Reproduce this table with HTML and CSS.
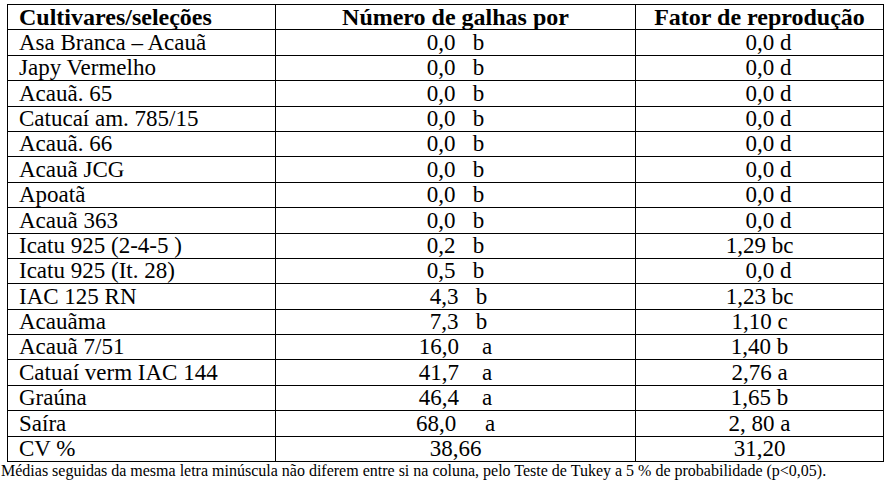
FILE: index.html
```html
<!DOCTYPE html>
<html lang="pt">
<head>
<meta charset="utf-8">
<link rel="stylesheet" href="styles.css">
</head>
<body>
<div class="page">
<table class="data">
  <colgroup>
    <col class="c1"><col class="c2"><col class="c3">
  </colgroup>
  <thead>
    <tr><th class="name">Cultivares/seleções</th><th>Número de galhas por</th><th>Fator de reprodução</th></tr>
  </thead>
  <tbody>
    <tr><td class="name">Asa Branca – Acauã</td><td class="v2">0,0   b</td><td class="v3 zero">0,0 d</td></tr>
    <tr><td class="name">Japy Vermelho</td><td class="v2">0,0   b</td><td class="v3 zero">0,0 d</td></tr>
    <tr><td class="name">Acauã. 65</td><td class="v2">0,0   b</td><td class="v3 zero">0,0 d</td></tr>
    <tr><td class="name">Catucaí am. 785/15</td><td class="v2">0,0   b</td><td class="v3 zero">0,0 d</td></tr>
    <tr><td class="name">Acauã. 66</td><td class="v2">0,0   b</td><td class="v3 zero">0,0 d</td></tr>
    <tr><td class="name">Acauã JCG</td><td class="v2">0,0   b</td><td class="v3 zero">0,0 d</td></tr>
    <tr><td class="name">Apoatã</td><td class="v2">0,0   b</td><td class="v3 zero">0,0 d</td></tr>
    <tr><td class="name">Acauã 363</td><td class="v2">0,0   b</td><td class="v3 zero">0,0 d</td></tr>
    <tr><td class="name">Icatu 925 (2-4-5 )</td><td class="v2">0,2   b</td><td class="v3">1,29 bc</td></tr>
    <tr><td class="name">Icatu 925 (It. 28)</td><td class="v2">0,5   b</td><td class="v3 zero">0,0 d</td></tr>
    <tr><td class="name">IAC 125 RN</td><td class="v2"> 4,3   b</td><td class="v3">1,23 bc</td></tr>
    <tr><td class="name">Acauãma</td><td class="v2"> 7,3   b</td><td class="v3">1,10 c</td></tr>
    <tr><td class="name">Acauã 7/51</td><td class="v2">16,0    a</td><td class="v3">1,40 b</td></tr>
    <tr><td class="name">Catuaí verm IAC 144</td><td class="v2">41,7    a</td><td class="v3">2,76 a</td></tr>
    <tr><td class="name">Graúna</td><td class="v2">46,4    a</td><td class="v3">1,65 b</td></tr>
    <tr><td class="name">Saíra</td><td class="v2">68,0     a</td><td class="v3">2, 80 a</td></tr>
    <tr><td class="name">CV %</td><td class="v2">38,66</td><td class="v3">31,20</td></tr>
  </tbody>
</table>
<p class="note">Médias seguidas da mesma letra minúscula não diferem entre si na coluna, pelo Teste de Tukey a 5 % de probabilidade (p&lt;0,05).</p>
</div>
</body>
</html>
```

FILE: styles.css
```css
html, body {
  margin: 0;
  padding: 0;
  background: #ffffff;
}

.page {
  padding: 4px 0 0 7px;
  font-family: "Liberation Serif", "Times New Roman", serif;
  color: #000000;
}

.data {
  border-collapse: collapse;
  table-layout: fixed;
  width: 876px;
}

.c1 { width: 268px; }
.c2 { width: 360px; }
.c3 { width: 248px; }

.data th,
.data td {
  border: 1px solid #000;
  height: 24.4px;
  padding: 0;
  font-size: 23px;
  line-height: 24px;
  white-space: pre;
  text-align: center;
  vertical-align: bottom;
  overflow: hidden;
}

.data th {
  font-weight: bold;
  font-size: 24px;
}

.data .name {
  text-align: left;
  padding-left: 11px;
}

.data .zero {
  padding-left: 18px;
}

.note {
  margin: 0 0 0 -6px;
  font-size: 16px;
  line-height: 18px;
}
```
